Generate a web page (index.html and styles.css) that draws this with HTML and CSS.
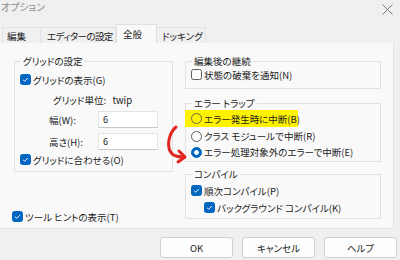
FILE: index.html
```html
<!DOCTYPE html>
<html lang="ja">
<head>
    <meta charset="UTF-8">
    <title>オプション</title>
    <link rel="stylesheet" href="styles.css">
</head>
<body>

<div class="dialog">
    <div class="titlebar">
        <span class="title">オプション</span>
        <svg class="close" width="11" height="11" viewBox="0 0 11 11">
            <path d="M0.5 0.5 L10.5 10.5 M10.5 0.5 L0.5 10.5" stroke="#7a7a7a" stroke-width="1"/>
        </svg>
    </div>

    <div class="tabs">
        <div class="tab tab-1">編集</div>
        <div class="tab tab-2">エディターの設定</div>
        <div class="tab active">全般</div>
        <div class="tab tab-4">ドッキング</div>
    </div>

    <div class="panel">
        <div class="col-left">
            <fieldset class="group grid-group">
                <legend>グリッドの設定</legend>
                <label class="check show-grid"><span class="box checked"></span>グリッドの表示(G)</label>
                <div class="unit">グリッド単位:&nbsp;&nbsp;&nbsp;twip</div>
                <div class="field first">
                    <span class="field-label">幅(W):</span>
                    <span class="input">6</span>
                </div>
                <div class="field">
                    <span class="field-label">高さ(H):</span>
                    <span class="input">6</span>
                </div>
                <label class="check snap"><span class="box checked"></span>グリッドに合わせる(O)</label>
            </fieldset>

            <label class="check tooltips"><span class="box checked"></span>ツール ヒントの表示(T)</label>
        </div>

        <div class="col-right">
            <fieldset class="group edit-group">
                <legend>編集後の継続</legend>
                <label class="check"><span class="box"></span>状態の破棄を通知(N)</label>
            </fieldset>

            <fieldset class="group trap-group">
                <legend>エラー トラップ</legend>
                <label class="radio highlight"><span class="dot"></span>エラー発生時に中断(B)</label>
                <label class="radio"><span class="dot"></span>クラス モジュールで中断(R)</label>
                <label class="radio"><span class="dot on"></span>エラー処理対象外のエラーで中断(E)</label>
                <svg class="arrow" width="24" height="44" viewBox="0 0 24 44">
                    <path d="M10 4 C3 10 1 21 4 28 C6 32 10 34 17 34" fill="none" stroke="#e0261f" stroke-width="3" stroke-linecap="round"/>
                    <path d="M13 28 L19 34 L12 39" fill="none" stroke="#e0261f" stroke-width="3" stroke-linecap="round" stroke-linejoin="round"/>
                </svg>
            </fieldset>

            <fieldset class="group compile-group">
                <legend>コンパイル</legend>
                <label class="check"><span class="box checked"></span>順次コンパイル(P)</label>
                <label class="check sub"><span class="box checked"></span>バックグラウンド コンパイル(K)</label>
            </fieldset>
        </div>
    </div>

    <div class="buttons">
        <button class="btn">OK</button>
        <button class="btn">キャンセル</button>
        <button class="btn">ヘルプ</button>
    </div>
</div>

</body>
</html>
```

FILE: styles.css
```css
body {
    margin: 0;
    width: 400px;
    height: 260px;
    overflow: hidden;
    background-color: #f0f0f0;
    font-family: "Noto Sans CJK JP", "Noto Sans", sans-serif;
    font-feature-settings: "palt";
    font-size: 9.5px;
    color: #1b1b1b;
}

.dialog {
    display: flex;
    flex-direction: column;
    height: 260px;
}

.titlebar {
    height: 24px;
    display: flex;
    justify-content: space-between;
    align-items: flex-start;
}

.title {
    font-size: 10px;
    line-height: 13px;
    color: #8c8c8c;
    margin-left: 1px;
}

.close {
    margin: 4px 7px 0 0;
}

.tabs {
    display: flex;
    align-items: flex-end;
    height: 20px;
    padding-left: 2px;
}

.tab {
    height: 17px;
    line-height: 16px;
    box-sizing: border-box;
    border: 1px solid #e3e3e3;
    border-bottom: none;
    background-color: #f0f0f0;
    white-space: nowrap;
    overflow: hidden;
}

.tab-1 {
    width: 38px;
    padding-left: 4px;
    border-right: none;
}

.tab-2 {
    width: 76px;
    padding-left: 6px;
    letter-spacing: -0.6px;
}

.tab-4 {
    width: 49px;
    padding-left: 5px;
    border-left: none;
}

.tab.active {
    height: 20px;
    width: 41px;
    background-color: #f9f9f9;
    border-color: #e0e0e0;
    line-height: 18px;
    padding-left: 6px;
}

.panel {
    height: 186px;
    width: 394px;
    box-sizing: border-box;
    background-color: #f9f9f9;
    border: 1px solid #e3e3e3;
    border-left: none;
    border-top: none;
    display: flex;
    padding: 12px 0 0 14px;
    margin-top: -1px;
}

.col-left {
    width: 159px;
    display: flex;
    flex-direction: column;
}

.col-right {
    width: 196px;
    margin-left: 12px;
    display: flex;
    flex-direction: column;
}

.group {
    margin: 0;
    border: 1px solid #e1e1e1;
    padding: 0 4px 0 5px;
    box-sizing: border-box;
    position: relative;
}

.group legend {
    padding: 0 2px;
    margin-left: 1px;
    line-height: 12px;
}

.grid-group {
    height: 117px;
}

.check,
.radio {
    display: flex;
    align-items: center;
    height: 15px;
    white-space: nowrap;
}

.box {
    width: 9px;
    height: 9px;
    border: 1px solid #5d5d5d;
    border-radius: 2.5px;
    background-color: #fdfdfd;
    margin-right: 2px;
    flex-shrink: 0;
}

.box.checked {
    border-color: #0067c0;
    background-color: #0067c0;
    background-image: url("data:image/svg+xml;utf8,<svg xmlns='http://www.w3.org/2000/svg' viewBox='0 0 9 9'><path d='M2 4.7 L3.8 6.3 L7 2.9' fill='none' stroke='white' stroke-width='0.9'/></svg>");
}

.show-grid {
    margin-top: 5px;
}

.unit {
    margin: 6px 0 0 33px;
    height: 14px;
    line-height: 14px;
}

.field {
    display: flex;
    align-items: center;
    margin-top: 5px;
}

.field.first {
    margin-top: 4px;
}

.field-label {
    width: 49px;
    margin-left: 29px;
}

.input {
    width: 60px;
    height: 17px;
    box-sizing: border-box;
    background-color: #ffffff;
    border: 1px solid #e5e5e5;
    border-bottom-color: #c8c8c8;
    padding: 0 0 0 4px;
    line-height: 15px;
    font-size: 9px;
}

.snap {
    margin-top: 2px;
}

.tooltips {
    margin: 37px 0 0 -2px;
}

.edit-group {
    height: 34px;
}

.trap-group {
    height: 65px;
    margin-top: 8px;
    padding-top: 3px;
}

.radio {
    height: 16px;
}

.dot {
    width: 9px;
    height: 9px;
    border: 1px solid #5d5d5d;
    border-radius: 50%;
    margin-right: 2px;
    flex-shrink: 0;
}

.dot.on {
    border-color: #0067c0;
    background-color: #0067c0;
    background-image: radial-gradient(circle, #ffffff 0 2px, transparent 2.6px);
}

.highlight {
    background-color: #fff200;
    width: 113px;
    height: 17px;
    margin: -2px 0 1px -6px;
    padding-left: 6px;
    align-items: flex-end;
    padding-bottom: 1px;
    box-sizing: border-box;
}

.highlight .dot {
    border-color: #6a6a3a;
    margin-bottom: 2px;
}

.arrow {
    position: absolute;
    left: -20px;
    top: 14px;
}

.compile-group {
    height: 51px;
    margin-top: 6px;
    padding-top: 3px;
}

.sub {
    margin: 2px 0 0 13px;
}

.buttons {
    display: flex;
    justify-content: flex-end;
    gap: 9px;
    padding: 8px 3px 0 0;
}

.btn {
    width: 73px;
    height: 21px;
    background-color: #fdfdfd;
    border: 1px solid #d0d0d0;
    border-radius: 3px;
    font-family: "Noto Sans CJK JP", sans-serif;
    font-feature-settings: "palt";
    font-size: 9.5px;
    color: #1b1b1b;
    padding: 0;
}
```
